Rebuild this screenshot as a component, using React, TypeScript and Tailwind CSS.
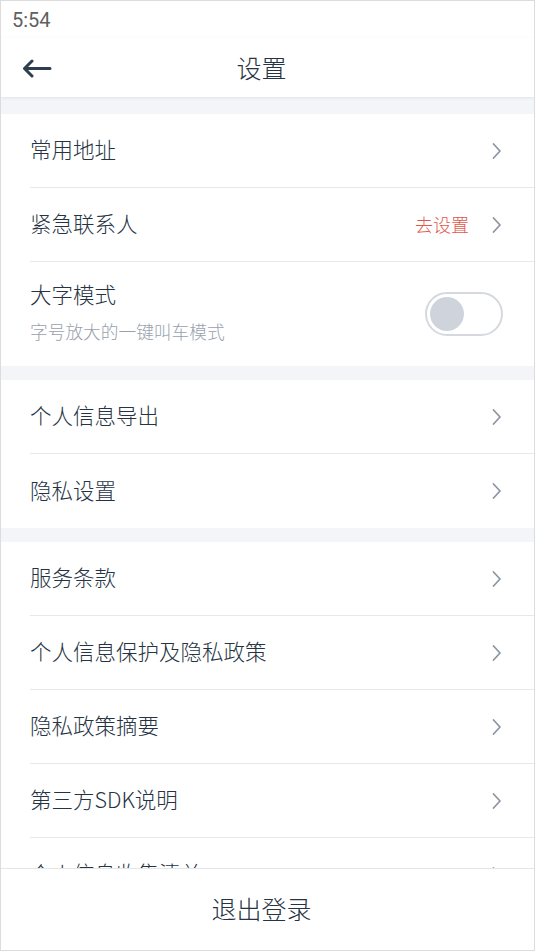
import React from "react";

const Chevron = () => (
  <svg width="12" height="18" viewBox="0 0 12 18" fill="none" className="shrink-0">
    <path d="M2.5 2 L9 9 L2.5 16" stroke="#8d96a3" strokeWidth="1.8" strokeLinecap="round" strokeLinejoin="round" />
  </svg>
);

const Row = ({ label, right, last }: { label: string; right?: React.ReactNode; last?: boolean }) => (
  <div className="pl-[29px] bg-white">
    <div className={`h-[74px] flex items-center pr-[31px] ${last ? "" : "border-b border-[#e6e8eb]"}`}>
      <span className="flex-1 text-[21.5px] font-light text-[#263343] leading-none -mt-[3px]">{label}</span>
      {right}
      <Chevron />
    </div>
  </div>
);

export default function App() {
  return (
    <div
      className="w-[535px] h-[951px] flex flex-col overflow-hidden border border-[#dcdcdc] bg-white"
      style={{ fontFamily: '"Noto Sans CJK SC", "Noto Sans", sans-serif' }}
    >
      <div className="h-[37px] shrink-0 flex items-center pl-[11px]">
        <span className="text-[20px] font-normal text-[#5f5f5f] leading-none" style={{ fontFamily: "Roboto, sans-serif" }}>5:54</span>
      </div>
      <div className="h-[59px] shrink-0 relative flex items-center justify-center pr-[12px] bg-white z-10 shadow-[0_1px_3px_rgba(0,0,0,0.08)]">
        <svg width="30" height="20" viewBox="0 0 30 20" fill="none" className="absolute left-[21px] top-[21px]">
          <path d="M28 9.5 H3 M10 2 L2.5 9.5 L10 17" stroke="#2f3e4f" strokeWidth="3" strokeLinecap="round" strokeLinejoin="round" />
        </svg>
        <span className="text-[25px] font-light text-[#263343] leading-none">设置</span>
      </div>
      <div className="flex-1 overflow-hidden bg-[#f3f5f9] pt-[17px] flex flex-col gap-[14px]">
        <div className="flex flex-col">
          <Row label="常用地址" />
          <Row label="紧急联系人" right={<span className="text-[18px] font-light text-[#e0574a] mr-[22px] leading-none -mt-[2px]">去设置</span>} />
          <div className="pl-[29px] pr-[31px] h-[104px] bg-white flex items-center">
            <div className="flex-1 flex flex-col -mt-[4px]">
              <span className="text-[21.5px] font-light text-[#263343] leading-none">大字模式</span>
              <span className="text-[17.7px] font-light text-[#98a1ad] leading-none mt-[19px]">字号放大的一键叫车模式</span>
            </div>
            <div className="w-[78px] h-[44px] rounded-full border-2 border-[#d5d9df] bg-white flex items-center pl-[3px]">
              <div className="w-[34px] h-[34px] rounded-full bg-[#cfd4dc]" />
            </div>
          </div>
        </div>
        <div className="flex flex-col">
          <Row label="个人信息导出" />
          <Row label="隐私设置" last />
        </div>
        <div className="flex flex-col">
          <Row label="服务条款" />
          <Row label="个人信息保护及隐私政策" />
          <Row label="隐私政策摘要" />
          <Row label="第三方SDK说明" />
          <Row label="个人信息收集清单" />
        </div>
      </div>
      <div className="h-[82px] shrink-0 border-t border-[#e3e5e8] bg-white flex items-center justify-center pr-[12px]">
        <span className="text-[25px] font-light text-[#263343] leading-none -mt-[2px]">退出登录</span>
      </div>
    </div>
  );
}
